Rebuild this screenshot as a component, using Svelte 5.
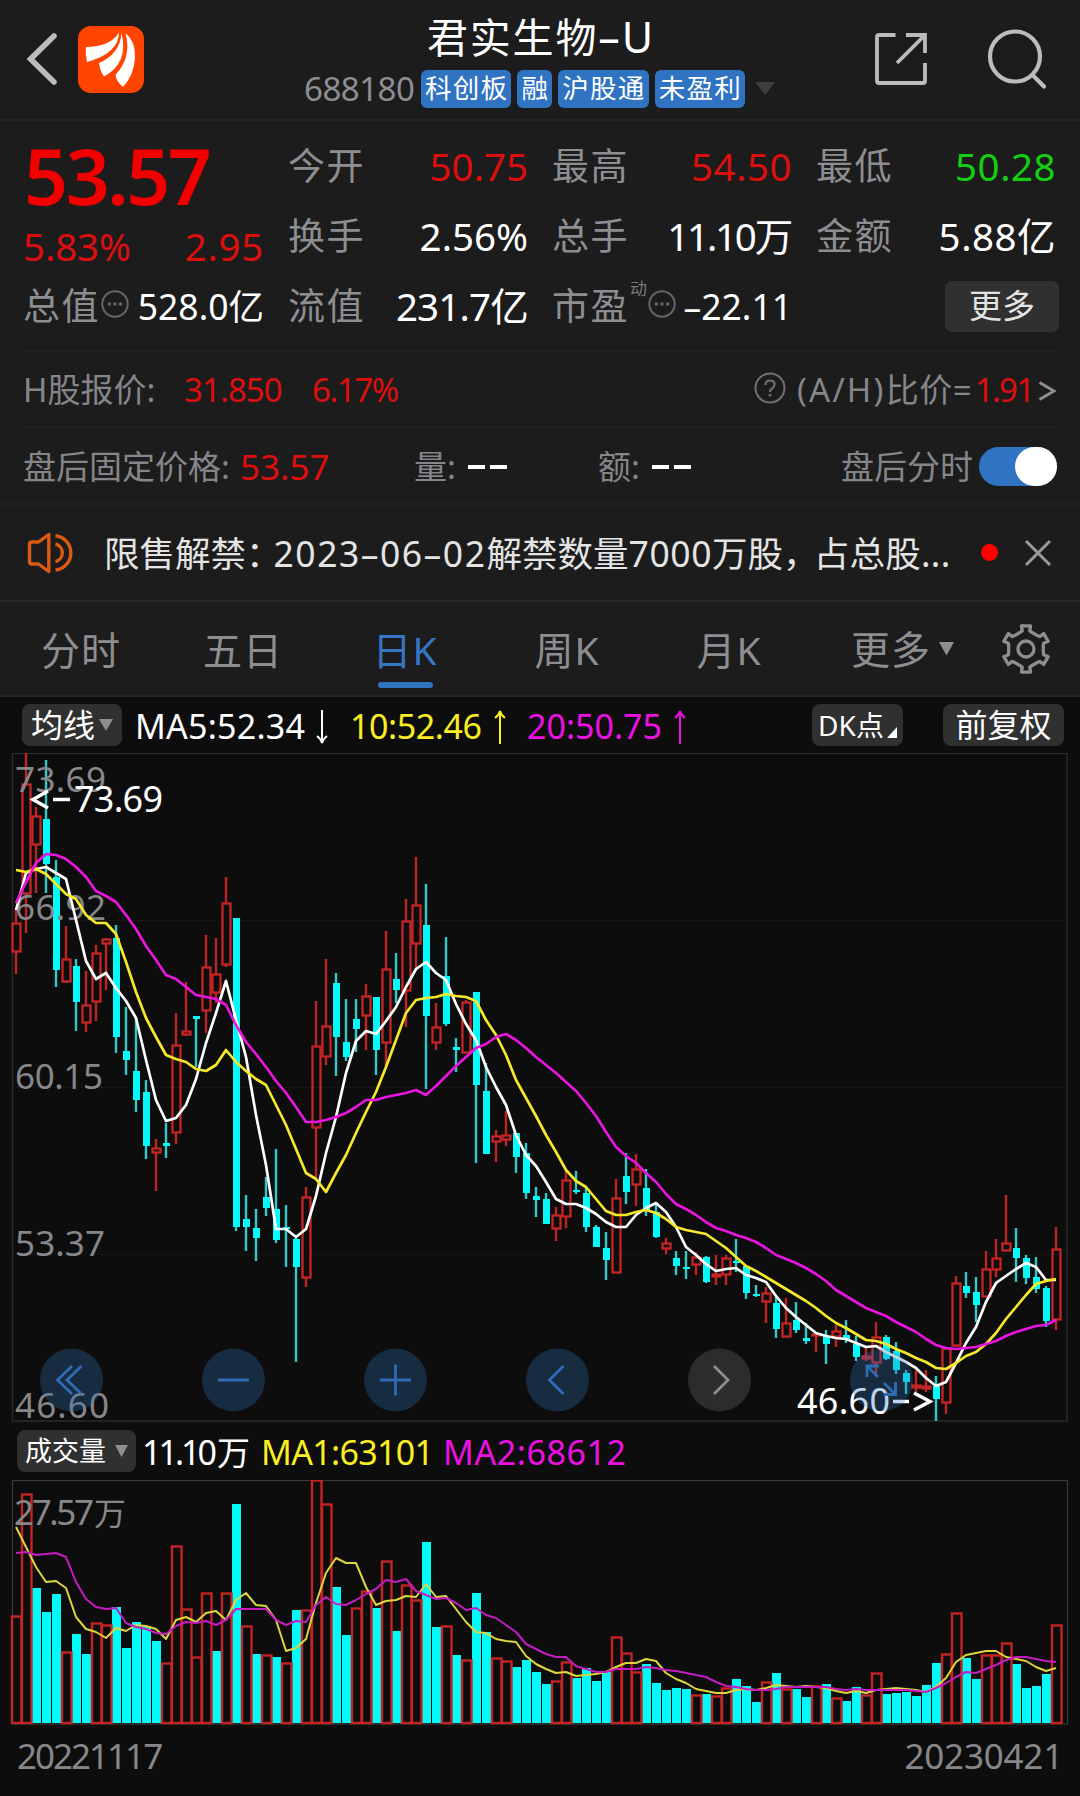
<script>
  // One row per trading day: [high, body top, body bottom, low] on the price canvas.
  const candles = [
    [910,923,951,974],[753,784,893,933],[807,816,844,893],[760,819,864,893],[860,877,970,987],[926,959,981,983],[959,966,1002,1031],
    [971,1005,1022,1032],[945,953,1001,1021],[938,939,943,990],[925,938,1037,1053],[1007,1051,1060,1075],[1017,1071,1100,1112],
    [1080,1092,1146,1159],[1139,1148,1152,1191],[1123,1143,1146,1158],[1013,1045,1132,1144],[982,1031,1034,1036],[1016,1016,1019,1067],
    [935,967,1010,1033],[938,974,992,1003],[877,903,964,967],[918,918,1227,1231],[1195,1219,1227,1251],[1209,1228,1238,1261],
    [1177,1197,1208,1216],[1149,1209,1240,1243],[1205,1227,1229,1267],[1237,1239,1267,1362],[1187,1197,1277,1287],[1001,1046,1127,1178],
    [959,1026,1056,1065],[973,983,1037,1076],[999,1042,1057,1061],[999,1019,1029,1052],[984,996,1015,1050],[997,997,1050,1075],
    [931,969,1042,1068],[953,979,990,1003],[899,921,990,1027],[857,905,943,968],[884,925,1016,1089],[1003,1027,1042,1050],
    [937,976,1024,1026],[1038,1047,1050,1072],[1000,1002,1052,1052],[992,992,1085,1163],[1063,1091,1154,1154],[1130,1136,1141,1162],
    [1111,1135,1139,1146],[1133,1133,1157,1173],[1143,1153,1193,1199],[1187,1196,1200,1217],[1193,1199,1224,1224],[1207,1215,1228,1241],
    [1170,1180,1216,1228],[1171,1190,1192,1194],[1187,1193,1227,1232],[1225,1227,1247,1247],[1232,1248,1260,1280],[1179,1198,1272,1272],
    [1153,1176,1192,1204],[1154,1169,1184,1206],[1169,1188,1210,1216],[1203,1212,1237,1238],[1238,1243,1248,1254],[1251,1258,1266,1275],
    [1251,1267,1268,1279],[1252,1257,1264,1275],[1256,1257,1282,1283],[1255,1274,1276,1285],[1255,1258,1274,1285],[1239,1261,1262,1272],
    [1266,1266,1293,1299],[1285,1294,1295,1297],[1287,1293,1301,1323],[1297,1303,1329,1338],[1298,1323,1336,1336],[1302,1320,1330,1333],
    [1323,1338,1341,1344],[1334,1334,1335,1352],[1330,1336,1344,1364],[1325,1331,1336,1347],[1320,1335,1339,1343],[1336,1344,1357,1361],
    [1346,1356,1358,1361],[1322,1337,1362,1373],[1335,1337,1359,1360],[1342,1351,1370,1374],[1370,1373,1382,1394],[1370,1385,1387,1392],
    [1370,1386,1388,1392],[1376,1386,1399,1421],[1348,1348,1402,1414],[1276,1283,1345,1347],[1272,1286,1293,1298],[1277,1292,1305,1322],
    [1251,1269,1296,1296],[1239,1258,1269,1277],[1195,1243,1250,1250],[1228,1248,1258,1282],[1255,1258,1278,1284],[1257,1277,1289,1293],
    [1286,1288,1321,1327],[1227,1249,1319,1330]
  ];
  // Days that closed lower are drawn as filled cyan candles.
  const down = new Set([3,4,6,10,11,12,13,15,18,22,23,24,25,26,27,28,32,33,34,36,38,41,43,44,46,47,50,51,52,53,56,57,58,59,61,63,64,66,67,69,72,73,74,76,78,79,81,83,84,87,88,89,92,95,96,100,101,102,103]);

  const ma5 = [910,873,869,867,873,879,920,961,979,973,988,1001,1018,1060,1100,1121,1118,1105,1079,1043,1013,981,1020,1057,1115,1165,1229,1229,1237,1229,1196,1153,1117,1073,1041,1031,1034,1021,1007,987,969,962,973,980,1004,1024,1040,1067,1087,1105,1135,1155,1166,1182,1199,1204,1204,1208,1214,1222,1227,1227,1215,1208,1203,1212,1227,1247,1255,1264,1271,1269,1268,1275,1278,1282,1296,1308,1317,1325,1333,1336,1338,1339,1343,1347,1346,1352,1357,1362,1368,1378,1386,1382,1363,1343,1327,1302,1283,1276,1269,1263,1267,1280,1280];
  const ma10 = [870,872,869,874,884,894,899,915,923,923,934,962,992,1018,1037,1055,1059,1062,1069,1071,1065,1050,1062,1071,1079,1085,1105,1125,1149,1173,1179,1192,1173,1155,1133,1112,1092,1067,1040,1013,1000,998,997,994,996,997,1001,1020,1035,1055,1080,1098,1116,1135,1152,1170,1181,1187,1199,1211,1215,1215,1212,1210,1213,1219,1227,1230,1232,1234,1241,1248,1257,1266,1271,1277,1283,1289,1295,1301,1308,1316,1323,1328,1334,1340,1341,1344,1349,1353,1358,1362,1368,1369,1363,1356,1352,1344,1333,1319,1307,1295,1284,1281,1279];
  const ma20 = [903,882,863,854,855,859,867,877,891,896,902,915,929,946,960,975,979,987,995,997,999,1005,1025,1042,1054,1067,1081,1093,1107,1122,1122,1120,1117,1113,1107,1100,1100,1097,1095,1093,1090,1095,1086,1076,1066,1057,1048,1044,1037,1034,1040,1048,1057,1065,1073,1082,1091,1103,1116,1132,1147,1156,1163,1173,1182,1194,1204,1209,1215,1222,1228,1231,1235,1238,1242,1248,1255,1259,1263,1268,1274,1281,1290,1296,1302,1308,1312,1316,1322,1327,1332,1339,1345,1348,1349,1348,1347,1344,1341,1336,1332,1329,1326,1325,1320];

  const volumes = [1616,1494,1588,1612,1594,1652,1634,1654,1623,1625,1607,1648,1622,1626,1641,1663,1546,1609,1657,1593,1651,1593,1504,1626,1654,1655,1657,1663,1610,1610,1480,1504,1587,1635,1608,1591,1608,1561,1631,1585,1600,1542,1627,1626,1655,1660,1593,1632,1658,1661,1667,1660,1672,1684,1681,1662,1678,1668,1681,1672,1637,1653,1672,1664,1683,1690,1688,1689,1695,1694,1696,1688,1679,1686,1702,1682,1673,1689,1689,1697,1686,1684,1698,1701,1687,1695,1673,1694,1693,1692,1696,1685,1663,1654,1613,1658,1679,1655,1655,1643,1664,1688,1686,1674,1625];
  const volumeDown = new Set([2,3,4,6,7,10,11,12,13,14,20,22,24,26,28,32,33,36,38,41,42,44,46,47,50,51,52,53,56,57,58,59,63,64,65,66,67,69,72,73,74,76,78,79,81,83,84,87,88,89,90,91,92,95,96,100,101,102,103]);
  const vma1 = [1527,1547,1567,1582,1581,1588,1617,1629,1632,1638,1628,1631,1625,1626,1629,1639,1620,1617,1622,1613,1611,1620,1600,1593,1605,1606,1620,1651,1648,1639,1603,1573,1558,1563,1563,1587,1605,1601,1600,1596,1597,1584,1597,1596,1609,1622,1632,1633,1639,1641,1642,1656,1664,1669,1673,1672,1676,1675,1674,1672,1667,1663,1663,1659,1661,1673,1679,1683,1689,1691,1693,1693,1690,1689,1690,1688,1685,1686,1687,1686,1687,1688,1691,1693,1691,1693,1690,1689,1688,1689,1690,1692,1687,1678,1662,1655,1653,1651,1651,1657,1659,1661,1667,1671,1668];
  const vma2 = [1553,1552,1555,1554,1553,1557,1582,1599,1607,1609,1608,1623,1627,1629,1633,1634,1626,1622,1623,1621,1625,1620,1609,1609,1609,1609,1620,1625,1621,1622,1605,1597,1604,1605,1600,1594,1589,1580,1582,1579,1591,1595,1599,1598,1603,1610,1608,1615,1618,1625,1632,1644,1649,1654,1657,1657,1666,1669,1672,1672,1669,1669,1669,1667,1668,1670,1671,1673,1675,1677,1682,1686,1687,1689,1690,1690,1689,1687,1687,1687,1687,1687,1689,1690,1689,1690,1690,1690,1690,1690,1691,1692,1688,1683,1677,1672,1673,1669,1665,1660,1657,1657,1659,1661,1662];

  const x = (i) => 16 + i * 10;
  const line = (ys) => ys.map((y, i) => `${x(i)},${y}`).join(' ');

  // Six-toothed gear outline, centred on the origin.
  const gear = Array.from({ length: 6 }, (_, k) =>
    [[-22, 17.5], [-12, 18.5], [-11, 23.5], [11, 23.5], [12, 18.5], [22, 17.5]].map(([d, r]) => {
      const a = ((k * 60 - 90 + d) * Math.PI) / 180;
      return `${(r * Math.cos(a)).toFixed(1)},${(r * Math.sin(a)).toFixed(1)}`;
    }).join(' ')
  ).join(' ');

  const tags = ['科创板', '融', '沪股通', '未盈利'];
  const tabs = ['分时', '五日', '日K', '周K', '月K'];
</script>

{#snippet dots()}
  <svg class="dots" viewBox="0 0 28 28">
    <circle cx="14" cy="14" r="12.7" fill="none" stroke="#66666a" stroke-width="2" />
    <circle cx="8.4" cy="14" r="1.8" /><circle cx="14" cy="14" r="1.8" /><circle cx="19.6" cy="14" r="1.8" />
  </svg>
{/snippet}

<div class="app">
  <header>
    <div class="left-tools">
      <svg width="32" height="54" viewBox="0 0 32 54"><path d="M28 4 L4.500 27 L28 50" fill="none" stroke="#bcbcbc" stroke-width="5.500" stroke-linecap="round" /></svg>
      <svg class="logo" width="66" height="67" viewBox="78 25 66 67">
        <rect x="78" y="25" width="66" height="67" rx="13" fill="#ff4500" />
        <g fill="#fff">
          <path d="M86 46 Q110 46 119 31.500 Q119 52 87 61 Q85 53 86 46Z" />
          <path d="M121.500 32 Q120 53 99 62 Q100 70 104 75.500 Q129 62 121.500 32Z" />
          <path d="M125.500 32 Q136 41 135 57 Q134 74 123 86 Q116 80 115.500 74 Q132 56 125.500 32Z" />
        </g>
      </svg>
    </div>
    <div class="title">
      <h1>君实生物<span class="suffix">–U</span></h1>
      <div class="sub">
        <span class="code">688180</span>
        {#each tags as t}<span class="tag">{t}</span>{/each}
        <svg class="tri" width="20" height="14" viewBox="0 0 20 14"><path d="M0 0H20L10 13Z" fill="#3e3e3e" /></svg>
      </div>
    </div>
    <div class="right-tools">
      <svg width="56" height="56" viewBox="875 30 56 56" fill="none" stroke="#bcbcbc" stroke-width="3.800" stroke-linecap="butt">
        <path d="M896.500 34 H880 Q878 34 878 36 V80 Q878 82 880 82 H924 Q926 82 926 80 V62" />
        <path d="M907 34 H926 V52 M926 34 L898 62" />
      </svg>
      <svg class="search" width="60" height="62" viewBox="987 27 60 62" fill="none" stroke="#bcbcbc" stroke-width="4.200" stroke-linecap="round">
        <circle cx="1015" cy="55.500" r="25" /><path d="M1032.500 74 L1044 85.500" />
      </svg>
    </div>
  </header>

  <section class="quotes">
    <div class="col">
      <div class="price">53.57</div>
      <div class="chg"><span>5.83%</span><span class="abs">2.95</span></div>
      <div class="cell"><label>总值</label>{@render dots()}<b class="sm cap">528.0亿</b></div>
    </div>
    <div class="col">
      <div class="cell"><label>今开</label><b class="red">50.75</b></div>
      <div class="cell"><label>换手</label><b>2.56%</b></div>
      <div class="cell"><label>流值</label><b class="tight">231.7亿</b></div>
    </div>
    <div class="col">
      <div class="cell"><label>最高</label><b class="red wide">54.50</b></div>
      <div class="cell"><label>总手</label><b class="hands">11.10万</b></div>
      <div class="cell"><label>市盈</label><sup>动</sup>{@render dots()}<b class="sm pe">–22.11</b></div>
    </div>
    <div class="col">
      <div class="cell"><label>最低</label><b class="green wide">50.28</b></div>
      <div class="cell"><label>金额</label><b class="wide">5.88亿</b></div>
      <div class="cell"><button class="more">更多</button></div>
    </div>
  </section>

  <section class="row hk">
    <span class="k">H股报价:</span><span class="red hkp">31.850</span><span class="red hkc">6.17%</span>
    <svg class="help" width="32" height="32" viewBox="0 0 32 32" fill="none" stroke="#707074" stroke-width="2">
      <circle cx="16" cy="16" r="14.500" /><path d="M11.500 13 Q11.500 8.500 16 8.500 Q20.500 8.500 20.500 12.500 Q20.500 15 18 16.500 Q16 17.800 16 20" stroke-width="2.200" /><path d="M16 22 V24.500" stroke-width="2.600" />
    </svg>
    <span class="ratio"><span class="ah-pair">(A/H)</span>比价=</span><span class="red r191">1.91</span>
    <svg class="gt" width="18" height="22" viewBox="0 0 18 22"><path d="M1.500 2.500 L16 11 L1.500 19.500" fill="none" stroke="#8e8e92" stroke-width="3" /></svg>
  </section>
  <section class="row after">
    <span class="k">盘后固定价格:</span><span class="red ap">53.57</span>
    <span class="k vol">量:</span><span class="dash"><i></i><i></i></span>
    <span class="k amt">额:</span><span class="dash"><i></i><i></i></span>
    <span class="k ah">盘后分时</span><span class="toggle"><i></i></span>
  </section>

  <section class="notice">
    <svg width="50" height="44" viewBox="26 530 50 44" fill="none" stroke="#dc5a12" stroke-width="3.400" stroke-linejoin="round">
      <path d="M32 541 H38.500 L48.800 533.500 V570.500 L38.500 563 H32 Q29.500 563 29.500 560.500 V543.500 Q29.500 541 32 541Z" />
      <path d="M55.500 543 A9 9 0 0 1 55.500 560.500 M55.500 534.800 A17.200 17.200 0 0 1 55.500 569" />
    </svg>
    <p>限售解禁：<span class="when">2023–06–02</span>解禁数量<span class="qty">7000</span>万股，<span class="tail">占总股...</span></p>
    <span class="dot"></span>
    <svg width="28" height="28" viewBox="0 0 28 28"><path d="M2 2 L26 26 M26 2 L2 26" stroke="#9a9a9a" stroke-width="3" /></svg>
  </section>

  <nav>
    {#each tabs as t}<span class="tab" class:active={t === '日K'}>{t}</span>{/each}
    <span class="tab more-tab">更多<svg width="15" height="14" viewBox="0 0 15 14"><path d="M0 0H15L7.500 13.500Z" fill="#8e8e92" /></svg></span>
    <span class="gear"><svg width="52" height="52" viewBox="-26 -26 52 52" fill="none" stroke="#8e8e92" stroke-width="3.300"><polygon points={gear} stroke-linejoin="round" /><circle r="8" /></svg></span>
  </nav>

  <main>
    <div class="ma">
      <button class="chip avg">均线<svg width="14" height="12" viewBox="0 0 14 12"><path d="M0 0H14L7 12Z" fill="#8e8e92" /></svg></button>
      <svg class="ma-values" width="570" height="56" viewBox="130 697 570 56">
        <text x="135" y="739" textLength="170" fill="#fff">MA5:52.34</text>
        <text x="350" y="739" textLength="132" fill="#fbee23">10:52.46</text>
        <text x="527" y="739" textLength="135" fill="#ee10e2">20:50.75</text>
        <g fill="none" stroke-width="2">
          <path d="M322 710 V742 M317 736 Q321 739 322 743 Q323 739 327 736" stroke="#fff" />
          <path d="M500 744 V712 M495 718 Q499 715 500 711 Q501 715 505 718" stroke="#fbee23" />
          <path d="M680 744 V712 M675 718 Q679 715 680 711 Q681 715 685 718" stroke="#ee10e2" />
        </g>
      </svg>
      <button class="chip dk">DK点<svg width="10" height="11" viewBox="0 0 10 11"><path d="M10 0V11H0Z" fill="#fff" /></svg></button>
      <button class="chip adj">前复权</button>
    </div>

    <svg class="canvas" width="1080" height="669" viewBox="0 753 1080 669">
      <rect x="12.500" y="753.500" width="1054.500" height="667.500" fill="none" stroke="#2a2a2a" stroke-width="1.500" />
      {#each [920.5, 1087.5, 1254.5] as y}
        <line x1="13" x2="1067" y1={y} y2={y} stroke="#1e1e1e" stroke-dasharray="2 2" />
      {/each}
      {#each candles as [hi, top, bottom, lo], i}
        {#if down.has(i)}
          <line x1={x(i)} x2={x(i)} y1={hi} y2={lo} stroke="#33c9c9" stroke-width="2.400" />
          <rect x={x(i) - 3} y={top} width="7" height={Math.max(2, bottom - top)} fill="#00fbfb" />
        {:else}
          <path d="M{x(i)} {hi}V{top} M{x(i)} {bottom}V{lo}" stroke="#bd2424" stroke-width="2.400" />
          <rect x={x(i) - 3.5} y={top + .5} width="8" height={Math.max(1, bottom - top)} fill="none" stroke="#c62525" stroke-width="2.300" />
        {/if}
      {/each}
      <g fill="#87878a" font-size="35">
        <text x="15" y="792" textLength="91">73.69</text>
        <text x="15" y="920" textLength="91">66.92</text>
        <text x="15" y="1088.500" textLength="88">60.15</text>
        <text x="15" y="1255.500" textLength="90">53.37</text>
        <text x="15" y="1418" textLength="94">46.60</text>
      </g>
      <g fill="none" stroke-width="2.700" stroke-linejoin="round">
        <polyline points={line(ma5)} stroke="#fff" />
        <polyline points={line(ma10)} stroke="#f6e92a" />
        <polyline points={line(ma20)} stroke="#e815de" />
      </g>
      <g fill="#fff" font-size="36">
        <path d="M48 791 L33 799.500 L48 808 M53 799.500 H70" fill="none" stroke="#fff" stroke-width="3.500" />
        <text x="74" y="812" textLength="89">73.69</text>
        <text x="797" y="1414" textLength="93">46.60</text>
        <path d="M893 1401.500 H909 M914 1393 L930 1401.500 L914 1410" fill="none" stroke="#fff" stroke-width="3.500" />
      </g>
      {#each [71.5, 233.5, 395.5, 557.5, 719.5, 881.5] as cx}
        <circle {cx} cy="1380" r="31.500" fill={cx === 719.5 ? '#2c2c2c' : 'rgba(48,112,184,.3)'} />
      {/each}
      <g fill="none" stroke="#2f6cb5" stroke-width="2.800">
        <path d="M72 1366 L57.500 1380 L72 1394 M81.500 1366 L67 1380 L81.500 1394" />
        <path d="M218 1380 H249 M380 1380 H411 M395.500 1364.500 V1395.500" />
        <path d="M563.500 1366 L549.500 1380 L563.500 1394" />
        <path d="M714 1366 L728 1380 L714 1394" stroke="#8e8e92" />
        <path d="M867 1377 V1366 H879 M867 1366 L878 1377 M884 1394.500 H895.500 V1382 M895.500 1394.500 L884 1383" />
      </g>
    </svg>

    <div class="vol-head">
      <button class="chip volb">成交量<svg width="13" height="12" viewBox="0 0 13 12"><path d="M0 0H13L6.500 12Z" fill="#8e8e92" /></svg></button>
      <svg class="ma-values" width="500" height="58" viewBox="140 1422 500 58" font-size="35">
        <text x="142" y="1464.500" textLength="75" fill="#fff">11.10</text><text x="217" y="1464.500" font-size="33" fill="#fff">万</text>
        <text x="261" y="1464.500" textLength="173" fill="#fbee23">MA1:63101</text>
        <text x="443" y="1464.500" textLength="183" fill="#ee10e2">MA2:68612</text>
      </svg>
    </div>

    <svg class="canvas" width="1080" height="246" viewBox="0 1480 1080 246">
      <rect x="12.500" y="1480.500" width="1055" height="243.500" fill="none" stroke="#3a3a3a" stroke-width="1.200" />
      {#each volumes as top, i}
        {#if volumeDown.has(i)}
          <rect x={x(i) - 4} y={top} width="9" height={1723 - top} fill="#00fbfb" />
        {/if}
      {/each}
      {#each volumes as top, i}
        {#if !volumeDown.has(i)}
          <rect x={x(i) - 4} y={top + .5} width="9.500" height={1722.5 - top} fill="none" stroke="#c42424" stroke-width="2.400" />
        {/if}
      {/each}
      <text x="14" y="1525" textLength="80" fill="#87878a" font-size="35">27.57</text><text x="94" y="1525" fill="#87878a" font-size="32">万</text>
      <g fill="none" stroke-width="2" stroke-linejoin="round">
        <polyline points={line(vma1)} stroke="#ded63c" />
        <polyline points={line(vma2)} stroke="#c41cc0" />
      </g>
    </svg>

    <div class="dates"><span class="from">20221117</span><span class="to">20230421</span></div>
  </main>
</div>

<style>
  :global(body) { background: #0d0d0d; }
  .app { width: 1080px; height: 1796px; overflow: hidden; background: #1c1c1c; color: #fff; font-family: "Noto Sans", "Noto Sans CJK SC", sans-serif; display: flex; flex-direction: column; }
  .app * { box-sizing: border-box; }
  svg { display: block; flex: none; }
  button { border: 0; padding: 0; font-family: inherit; color: inherit; white-space: nowrap; }
  header { height: 121px; flex: none; border-bottom: 2px solid #262626; display: grid; grid-template-columns: 280px 1fr 206px; }
  .left-tools { display: flex; align-items: center; padding: 0 0 1px 26px; }
  .logo { margin-left: 20px; }
  .title { display: flex; flex-direction: column; padding-left: 24px; white-space: nowrap; }
  h1 { margin: 8px 0 0 123px; font-size: 41px; line-height: 58px; font-weight: 400; letter-spacing: 1.8px; }
  .suffix { font-size: 43px; letter-spacing: 2px; }
  .sub { display: flex; align-items: center; gap: 6px; height: 38px; margin-top: 4px; }
  .code { font-size: 33px; line-height: 38px; letter-spacing: -.5px; color: #8e8e92; width: 111px; }
  .tag { height: 38px; border-radius: 6px; background: #2f73c2; font-size: 26.500px; line-height: 36px; letter-spacing: 1.3px; padding: 0 3px 0 4px; }
  .tri { margin-left: 4px; }
  .right-tools { display: flex; align-items: center; padding-bottom: 2px; }
  .search { margin-left: 57px; }

  .quotes { flex: none; height: 229px; padding: 11px 24px 0; display: grid; grid-template-columns: repeat(4, 240px); gap: 24px; }
  .cell { height: 70px; display: flex; align-items: center; white-space: nowrap; font-size: 38.500px; line-height: 66px; padding-bottom: 3px; }
  label { color: #8e8e92; font-size: 37px; letter-spacing: 1.5px; }
  b { font-weight: 400; margin-left: auto; letter-spacing: 0; }
  .col:first-child label { margin-left: -1px; }
  .wide { letter-spacing: .5px; }
  .tight { letter-spacing: -.8px; }
  .hands { letter-spacing: -2.200px; margin-right: 1px; }
  .red { color: #dc0f0e; }
  .green { color: #12cf12; }
  .sm { font-size: 35.500px; }
  .price { height: 92px; font-size: 77px; line-height: 88px; font-weight: 600; color: #f20000; letter-spacing: -2.400px; }
  .chg { height: 48px; display: flex; justify-content: space-between; font-size: 38.500px; line-height: 44px; color: #dc0f0e; letter-spacing: -.1px; margin-left: -1px; }
  .abs { letter-spacing: .7px; }
  .dots { width: 28px; height: 28px; margin: -3px 0 0 1px; fill: #66666a; }
  sup { font-size: 17px; line-height: 18px; color: #77777b; margin: -34px 0 0 1px; }
  .more { width: 114px; height: 51px; border-radius: 7px; background: #303030; font-size: 33px; line-height: 48px; margin: 1px -3px 0 auto; color: #e4e4e4; }

  .row { flex: none; margin: 0 22px; padding: 0 2px 0 1px; border-top: 2px solid #222; height: 77px; display: flex; align-items: center; white-space: nowrap; font-size: 33px; line-height: 74px; padding-top: 3px; }
  .k, .ratio { color: #85858a; }
  .hk { height: 76px; padding-top: 2px; }
  .hkp { width: 128px; margin-left: 32px; letter-spacing: -.9px; }
  .hkc { letter-spacing: -1.400px; }
  .help { margin-left: auto; margin-top: -5px; }
  .ratio { margin-left: 11px; width: 178px; letter-spacing: .6px; }
  .ah-pair { letter-spacing: 2.200px; }
  .r191 { width: 56px; letter-spacing: -1.800px; }
  .gt { margin: 2px 0 0 7px; }
  .hk .k { width: 129px; }
  .after .k:first-child { width: 205px; }
  .ap { font-size: 35px; margin-left: 12px; width: 174px; }
  .dash { display: flex; gap: 5px; width: 40px; margin-top: -1px; }
  .dash i { width: 17px; height: 4px; background: #fff; }
  .vol, .amt { width: 42px; margin-right: 12px; }
  .amt { margin-left: 90px; }
  .ah { margin-left: auto; width: 138px; }
  .toggle { width: 78px; height: 39px; border-radius: 20px; background: #2f73c2; display: flex; justify-content: flex-end; margin: -2px -1px 0 0; }
  .toggle i { width: 42px; height: 39px; border-radius: 20px; background: #fff; }

  .notice { flex: none; height: 97px; border-top: 2px solid #222; display: flex; align-items: center; padding: 0 28px 0 26px; }
  .notice p { margin: 0 0 0 28px; width: 877px; font-size: 35.500px; line-height: 90px; white-space: nowrap; color: #e4e4e4; }
  .when { margin-left: -8px; letter-spacing: 1.500px; }
  .qty { letter-spacing: .6px; }
  .tail { margin-left: -5px; letter-spacing: .3px; }
  .dot { width: 17px; height: 17px; border-radius: 50%; background: #f00; }
  .notice > svg:last-child { margin-left: auto; }

  nav { flex: none; height: 97px; border-top: 2px solid #282828; border-bottom: 2px solid #242424; display: flex; }
  .tab { width: 162px; display: flex; flex-direction: column; align-items: center; font-size: 39px; line-height: 95px; color: #8e8e92; letter-spacing: 1px; height: 93px; }
  .active { color: #3577c4; }
  .active::after { content: ""; width: 55px; height: 6px; border-radius: 3px; background: #2f73c2; margin-top: -15px; flex: none; }
  .more-tab { flex-direction: row; justify-content: center; padding-left: 23px; }
  .more-tab svg { margin-left: 8px; }
  .gear { flex: 1; display: flex; align-items: center; justify-content: center; }

  main { flex: 1; background: #0d0d0d; }
  .ma { height: 56px; display: flex; align-items: center; padding: 0 16px 0 22px; }
  .chip { height: 42px; border-radius: 8px; background: #303030; display: flex; align-items: center; justify-content: center; font-size: 32px; line-height: 40px; color: #fff; }
  .avg { width: 100px; gap: 4px; }
  .ma-values { font-size: 34px; margin-left: 8px; }
  .dk { width: 91px; margin-left: auto; font-size: 28px; align-items: center; gap: 3px; }
  .dk svg { margin-top: 15px; }
  .adj { width: 121px; margin-left: 40px; }
  .canvas { display: block; }
  .vol-head { height: 58px; display: flex; align-items: center; padding-left: 17px; }
  .volb { width: 119px; font-size: 27px; gap: 9px; }
  .vol-head .ma-values { margin-left: 4px; }
  .dates { display: flex; justify-content: space-between; padding: 1px 17px 0 17px; font-size: 35px; line-height: 58px; color: #87878a; }
  .from { letter-spacing: -2px; }
  .to { letter-spacing: -.2px; }
</style>
